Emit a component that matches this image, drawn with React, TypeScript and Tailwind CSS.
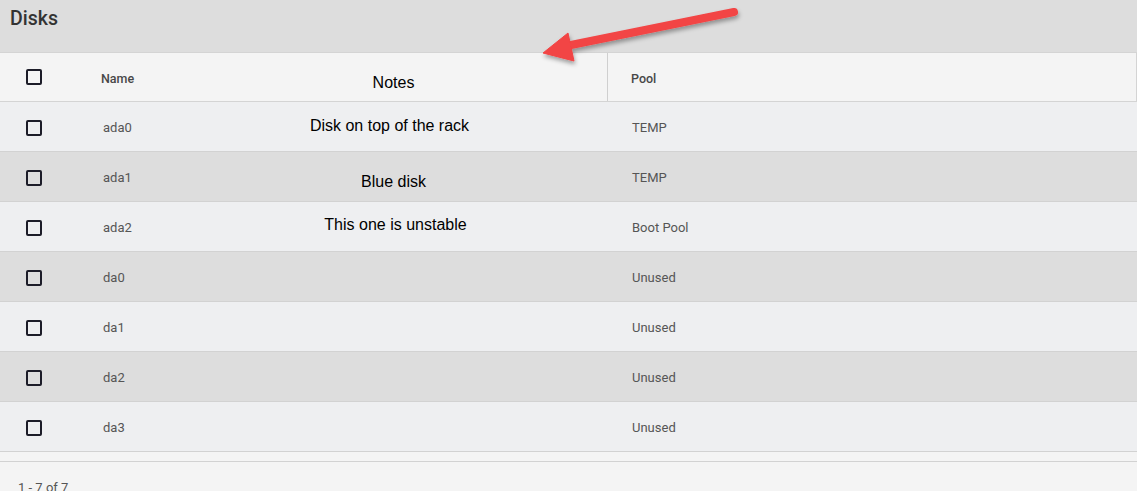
import { useState } from 'react'

type Disk = { name: string; pool: string; note?: string; shift?: string }

const disks: Disk[] = [
  { name: 'ada0', pool: 'TEMP', note: 'Disk on top of the rack', shift: '-translate-y-[2px] -translate-x-[4px]' },
  { name: 'ada1', pool: 'TEMP', note: 'Blue disk', shift: 'translate-y-[4px]' },
  { name: 'ada2', pool: 'Boot Pool', note: 'This one is unstable', shift: '-translate-y-[3px] translate-x-[2px]' },
  { name: 'da0', pool: 'Unused' },
  { name: 'da1', pool: 'Unused' },
  { name: 'da2', pool: 'Unused' },
  { name: 'da3', pool: 'Unused' },
]

function Checkbox() {
  return <span className="block h-[16px] w-[16px] rounded-[2px] border-2 border-[#1c1c28]" />
}

export default function App() {
  const [rows] = useState(disks)

  return (
    <div className="relative h-[491px] w-[1137px] overflow-hidden bg-[#f4f4f4] font-['Roboto',sans-serif]">
      {/* Title */}
      <div className="h-[52px] bg-[#dddddd] px-[10px] pt-[4px] text-[19.5px] font-medium text-[#333]">
        Disks
      </div>

      {/* Header */}
      <div className="flex h-[50px] items-center border-y border-r border-[#d4d4d4] bg-[#f4f4f4] text-[12.5px] font-medium text-[#474747]">
        <div className="flex w-[101px] items-center pl-[26px]">
          <Checkbox />
        </div>
        <div className="w-[79px] translate-y-[2px]">Name</div>
        <div className="flex h-full w-[427px] items-center justify-center pt-[11px] font-['Liberation_Sans',Arial,sans-serif] text-[16px] font-normal text-black">
          Notes
        </div>
        <div className="flex h-full flex-1 items-center border-l border-[#cfcfcf] pl-[23px]">
          <span className="translate-y-[2px]">Pool</span>
        </div>
      </div>

      {/* Rows */}
      {rows.map((d, i) => (
        <div
          key={d.name}
          className={`flex h-[50px] items-center border-b border-[#d2d2d2] pt-[2px] text-[13px] text-[#555] ${i % 2 ? 'bg-[#dddddd]' : 'bg-[#eeeff1]'}`}
        >
          <div className="flex w-[101px] items-center pl-[26px]">
            <Checkbox />
          </div>
          <div className="w-[79px] pl-[2px]">{d.name}</div>
          <div className="flex w-[427px] justify-center font-['Liberation_Sans',Arial,sans-serif] text-[16px] text-black">
            {d.note && <span className={d.shift}>{d.note}</span>}
          </div>
          <div className="flex-1 pl-[25px]">{d.pool}</div>
        </div>
      ))}

      <div className="h-[10px] border-b border-[#d2d2d2] bg-[#f4f4f4]" />

      {/* Footer */}
      <div className="px-[18px] pt-[16px] text-[13px] text-[#555]">1 - 7 of 7</div>

      {/* Annotation arrow */}
      <svg className="pointer-events-none absolute left-0 top-0" width="1137" height="120" viewBox="0 0 1137 120">
        <defs>
          <filter id="sh" x="-20%" y="-50%" width="140%" height="200%">
            <feDropShadow dx="1" dy="3" stdDeviation="2" floodColor="#000" floodOpacity="0.35" />
          </filter>
        </defs>
        <g filter="url(#sh)" fill="#f24444" stroke="#f24444">
          <line x1="734" y1="12" x2="566" y2="46" strokeWidth="8" strokeLinecap="round" />
          <polygon points="543,53 568,33 574,61" strokeWidth="1" strokeLinejoin="round" />
        </g>
      </svg>
    </div>
  )
}
